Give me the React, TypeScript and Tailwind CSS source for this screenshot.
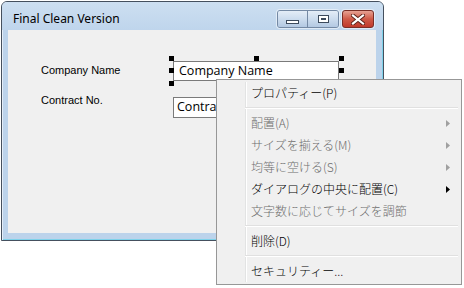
import React from "react";

// dialog editor with context menu open

const jp = { fontFamily: '"Noto Sans CJK JP", "Noto Sans", sans-serif' };

type Item =
  | { kind: "item"; label: string; disabled?: boolean; sub?: boolean }
  | { kind: "sep" };

const menuItems: Item[] = [
  { kind: "item", label: "プロパティー(P)" },
  { kind: "sep" },
  { kind: "item", label: "配置(A)", disabled: true, sub: true },
  { kind: "item", label: "サイズを揃える(M)", disabled: true, sub: true },
  { kind: "item", label: "均等に空ける(S)", disabled: true, sub: true },
  { kind: "item", label: "ダイアログの中央に配置(C)", sub: true },
  { kind: "item", label: "文字数に応じてサイズを調節", disabled: true },
  { kind: "sep" },
  { kind: "item", label: "削除(D)" },
  { kind: "sep" },
  { kind: "item", label: "セキュリティー..." },
];

const handles = [
  "left-[161px] top-[26px]",
  "left-[246px] top-[26px]",
  "left-[331px] top-[26px]",
  "left-[161px] top-[38px]",
  "left-[331px] top-[38px]",
  "left-[161px] top-[51px]",
];

const TitleButtons = () => (
  <div className="flex gap-[3px] mt-[8px]">
    <div className="flex rounded-[3px] border border-[#7489a4] overflow-hidden shadow-[0_0_0_1px_rgba(255,255,255,0.5)]">
      <div className="w-[30px] h-[16px] bg-gradient-to-b from-[#e4edf7] via-[#ccdcee] to-[#b3c8e2] flex items-end justify-center pb-[3px] border-r border-[#7489a4]">
        <div className="w-[13px] h-[4px] bg-white border border-[#3c4a5c]" />
      </div>
      <div className="w-[30px] h-[16px] bg-gradient-to-b from-[#e4edf7] via-[#ccdcee] to-[#b3c8e2] flex items-center justify-center">
        <div className="w-[11px] h-[8px] border border-[#3c4a5c] bg-white flex items-center justify-center">
          <div className="w-[5px] h-[2px] border border-[#3c4a5c]" />
        </div>
      </div>
    </div>
    <div className="w-[32px] h-[18px] rounded-[3px] border border-[#7a2e26] bg-gradient-to-b from-[#e6a193] via-[#cf5a48] to-[#c0392b] flex items-center justify-center shadow-[0_0_0_1px_rgba(255,255,255,0.5)]">
      <svg width="14" height="11" viewBox="0 0 14 11">
        <path d="M2 1.5 L12 9.5 M12 1.5 L2 9.5" stroke="#5a2018" strokeWidth="4" strokeLinecap="square" />
        <path d="M2 1.5 L12 9.5 M12 1.5 L2 9.5" stroke="#ffffff" strokeWidth="2.2" strokeLinecap="square" />
      </svg>
    </div>
  </div>
);

const ContextMenu = () => (
  <div className="absolute left-[216px] top-[79px] w-[246px] h-[206px] border border-[#979797] bg-[#f0f0f0] p-[2px]" style={jp}>
    <div className="absolute left-[28px] top-[2px] bottom-[2px] w-px bg-[#e2e3e3]" />
    <div className="absolute left-[29px] top-[2px] bottom-[2px] w-px bg-white" />
    <div className="relative flex flex-col">
      {menuItems.map((it, i) =>
        it.kind === "sep" ? (
          <div key={i} className="h-[8px] pt-[3px] ml-[26px] mr-[1px]">
            <div className="h-px bg-[#e0e0e0]" />
            <div className="h-px bg-white" />
          </div>
        ) : (
          <div
            key={i}
            className={`h-[22px] flex items-center pl-[32px] pr-[9px] text-[12px] font-light ${it.disabled ? "text-[#6d6d6d]" : "text-black"}`}
          >
            <span className="flex-1 leading-none whitespace-nowrap">{it.label}</span>
            {it.sub ? (
              <svg width="4" height="7" viewBox="0 0 4 7">
                <path d="M0 0 L4 3.5 L0 7 Z" fill={it.disabled ? "#a0a0a0" : "#000000"} />
              </svg>
            ) : null}
          </div>
        )
      )}
    </div>
  </div>
);

export default function App() {
  return (
    <div className="relative w-[464px] h-[288px] bg-white overflow-hidden">
      <div className="ml-[1px] mt-[1px] w-[383px] h-[240px] border border-[#45505e] rounded-t-[6px] bg-[#bcd3eb] flex flex-col shadow-[inset_1px_1px_0_#e4eef9,inset_-1px_-1px_0_#7fd2ea]">
        <div className="h-[28px] flex items-start justify-between pl-[11px] pr-[9px] rounded-t-[5px] bg-gradient-to-b from-[#cddff1] to-[#bfd5ec]">
          <span className="mt-[9px] text-[12px] leading-[16px] text-black" style={{ fontFamily: '"Noto Sans", "Open Sans", sans-serif' }}>
            Final Clean Version
          </span>
          <TitleButtons />
        </div>
        <div className="relative flex-1 ml-[6px] mr-[7px] mb-[7px] bg-[#f0f0f0]">
          <span className="absolute left-[33px] top-[34px] text-[11px] leading-[13px] text-black" style={{ fontFamily: '"Liberation Sans", Arial, sans-serif' }}>
            Company Name
          </span>
          <span className="absolute left-[33px] top-[64px] text-[11px] leading-[13px] text-black" style={{ fontFamily: '"Liberation Sans", Arial, sans-serif' }}>
            Contract No.
          </span>
          <div className="absolute left-[165px] top-[31px] w-[166px] h-[20px] border border-[#7a7a7a] bg-white pl-[5px] flex items-center text-[12.5px] text-black" style={{ fontFamily: '"Open Sans", "Noto Sans", sans-serif' }}>
            Company Name
          </div>
          <div className="absolute left-[165px] top-[67px] w-[166px] h-[21px] border border-[#7a7a7a] bg-white pl-[3px] flex items-center text-[12.5px] text-black" style={{ fontFamily: '"Open Sans", "Noto Sans", sans-serif' }}>
            Contract No.
          </div>
          {handles.map((h) => (
            <div key={h} className={`absolute w-[5px] h-[5px] bg-black ${h}`} />
          ))}
        </div>
      </div>
      <ContextMenu />
    </div>
  );
}
